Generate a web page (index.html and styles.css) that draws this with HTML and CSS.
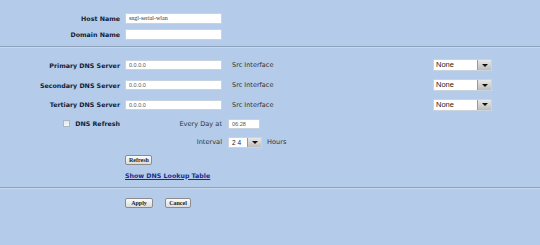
FILE: index.html
```html
<!DOCTYPE html>
<html lang="en">

<head>
    <meta charset="UTF-8">
    <meta name="viewport" content="width=device-width, initial-scale=1.0">
    <title>DNS Settings</title>
    <link rel="stylesheet" href="styles.css">
</head>

<body>
    <div class="section top">
        <div class="row h16">
            <label class="label">Host Name</label>
            <input class="text" type="text" value="sngl-serial-wlan">
        </div>
        <div class="row h16">
            <label class="label">Domain Name</label>
            <input class="text" type="text" value="">
        </div>
    </div>

    <div class="sep"></div>

    <div class="section dns">
        <div class="row h20">
            <label class="label">Primary DNS Server</label>
            <input class="text" type="text" value="0.0.0.0">
            <span class="src">Src Interface</span>
            <div class="combo"><span class="value">None</span><span class="arrow"></span></div>
        </div>
        <div class="row h20">
            <label class="label">Secondary DNS Server</label>
            <input class="text" type="text" value="0.0.0.0">
            <span class="src">Src Interface</span>
            <div class="combo"><span class="value">None</span><span class="arrow"></span></div>
        </div>
        <div class="row h19">
            <label class="label">Tertiary DNS Server</label>
            <input class="text" type="text" value="0.0.0.0">
            <span class="src">Src Interface</span>
            <div class="combo"><span class="value">None</span><span class="arrow"></span></div>
        </div>
        <div class="row h19">
            <div class="label check-cell">
                <span class="checkbox"></span>
                <span>DNS Refresh</span>
            </div>
            <span class="sub-label">Every Day at</span>
            <input class="text time" type="text" value="06:28">
        </div>
        <div class="row h18">
            <span class="label"></span>
            <span class="sub-label">Interval</span>
            <div class="combo small"><span class="value">2 4</span><span class="arrow"></span></div>
            <span class="hours">Hours</span>
        </div>
        <div class="row h17">
            <span class="label"></span>
            <button class="btn refresh">Refresh</button>
        </div>
        <div class="row h14">
            <span class="label"></span>
            <a class="link" href="#">Show DNS Lookup Table</a>
        </div>
    </div>

    <div class="sep"></div>

    <div class="section actions">
        <button class="btn apply">Apply</button>
        <button class="btn cancel">Cancel</button>
    </div>
</body>

</html>
```

FILE: styles.css
```css
body {
    margin: 0;
    padding: 0;
    width: 540px;
    height: 245px;
    background-color: #b4cce9;
    font-family: "DejaVu Sans", Verdana, sans-serif;
    font-size: 6.3px;
    color: #111d38;
    overflow: hidden;
}

.section.top {
    padding-top: 10px;
}

.section.dns {
    padding-top: 7px;
}

.section.actions {
    padding: 9px 0 0 125px;
    display: flex;
    gap: 12px;
}

.row {
    display: flex;
    align-items: center;
    white-space: nowrap;
}

.h14 { height: 14px; }
.h16 { height: 16px; }
.h17 { height: 17px; }
.h18 { height: 18px; }
.h19 { height: 19px; }
.h20 { height: 20px; }

.label {
    width: 125px;
    padding-right: 5px;
    box-sizing: border-box;
    text-align: right;
    font-weight: bold;
    flex-shrink: 0;
}

.text {
    width: 97px;
    height: 11px;
    box-sizing: border-box;
    margin: 0;
    padding: 0 3px;
    border: 1px solid #c7d3e0;
    background-color: #fff;
    font-family: "Liberation Serif", serif;
    font-size: 6px;
    color: #333;
    outline: none;
}

.dns .text {
    height: 10px;
    font-family: "Liberation Sans", Arial, sans-serif;
    font-size: 5.5px;
    color: #555;
}

.src {
    width: 201px;
    padding-left: 10px;
    color: #333;
    font-size: 6.5px;
    flex-shrink: 0;
}

.combo {
    display: flex;
    width: 59px;
    height: 12px;
    box-sizing: border-box;
    background-color: #fff;
    border: 1px solid #c9d4df;
    font-family: "Liberation Sans", Arial, sans-serif;
    font-size: 7.5px;
    color: #222;
    flex-shrink: 0;
}

.combo .value {
    flex: 1;
    padding-left: 2px;
    line-height: 10px;
}

.combo .arrow {
    width: 13px;
    background: linear-gradient(#e8e8e8, #bdbdbd);
    border-left: 1px solid #9a9a9a;
    display: flex;
    align-items: center;
    justify-content: center;
}

.combo .arrow::after {
    content: "";
    border-left: 3px solid transparent;
    border-right: 3px solid transparent;
    border-top: 3px solid #111;
}

.combo.small {
    width: 34px;
    height: 11px;
    margin-left: 6px;
}

.combo.small .value {
    padding-left: 3px;
    font-size: 6.5px;
}

.check-cell {
    display: flex;
    align-items: center;
    padding-left: 63px;
}

.checkbox {
    width: 7px;
    height: 7px;
    box-sizing: border-box;
    border: 1px solid #a9b6c4;
    background: linear-gradient(#dfe6ee, #f6f8fa);
    margin-right: auto;
}

.sub-label {
    width: 97px;
    text-align: right;
    color: #333;
    font-size: 6.6px;
    flex-shrink: 0;
}

.time {
    width: 32px;
    margin-left: 6px;
}

.hours {
    margin-left: 5px;
    color: #333;
    font-size: 6.6px;
}

.btn {
    height: 10px;
    box-sizing: border-box;
    margin: 0;
    padding: 0 3px;
    border: 1px solid #8c8c8c;
    border-radius: 2px;
    background: linear-gradient(#fbfbfb, #dcdcdc);
    font-family: "Liberation Serif", serif;
    font-size: 6px;
    font-weight: bold;
    color: #222;
    line-height: 8px;
}

.refresh {
    width: 27px;
}

.apply {
    width: 28px;
}

.cancel {
    width: 26px;
}

.link {
    color: #1c2b8c;
    font-weight: bold;
    text-decoration: underline;
}

.sep {
    margin-top: 4px;
    border-top: 1px solid #8ea3bb;
    border-bottom: 1px solid #c6d8ee;
}

.dns + .sep {
    margin-top: 5px;
}
```
